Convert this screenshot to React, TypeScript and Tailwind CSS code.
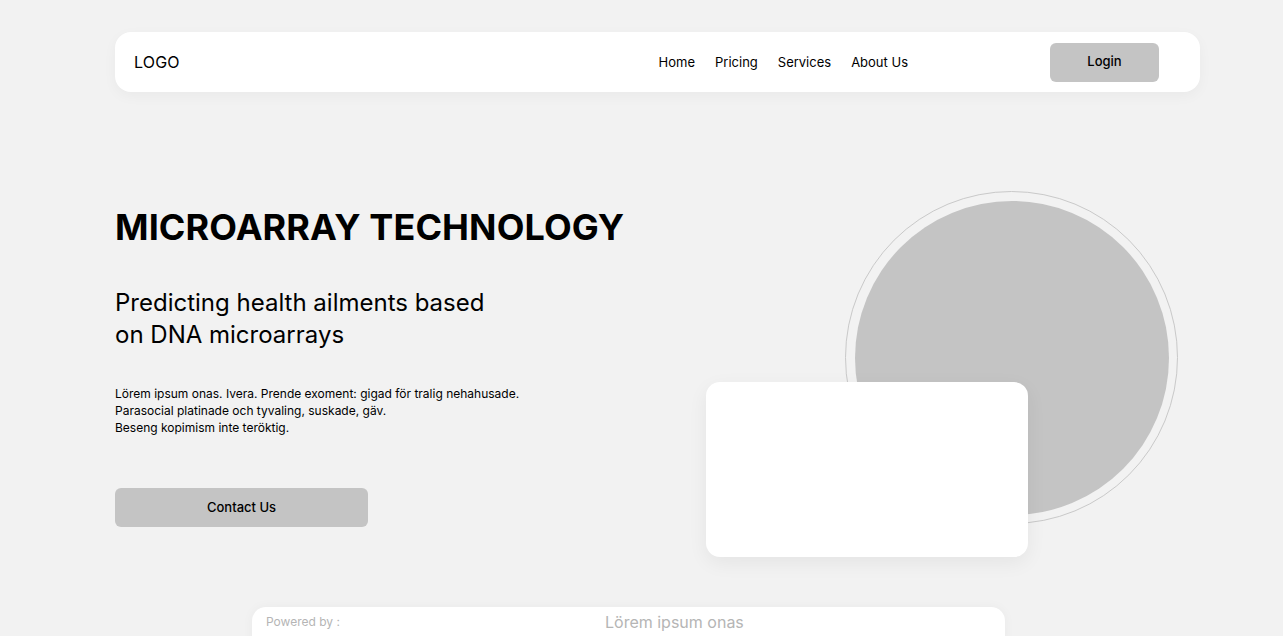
import React from "react";

export default function App() {
  return (
    <div
      className="min-h-[636px] w-full overflow-hidden bg-[#f2f2f2] text-black"
      style={{ fontFamily: "Inter, 'Noto Sans', sans-serif" }}
    >
      {/* Nav */}
      <div className="pt-8">
        <nav className="ml-[115px] flex h-[60px] w-[1085px] items-center rounded-2xl bg-white pl-[19px] pr-[41px] shadow-[0_4px_14px_rgba(0,0,0,0.04)]">
          <div className="text-[16px] tracking-[0.2px]">LOGO</div>
          <div className="ml-auto mr-[142px] flex gap-[20px] pt-[2px] text-[13px]">
            <span>Home</span>
            <span>Pricing</span>
            <span>Services</span>
            <span>About Us</span>
          </div>
          <button className="h-[39px] w-[109px] rounded-md bg-[#c4c4c4] pb-[1px] text-[13px] font-medium">
            Login
          </button>
        </nav>
      </div>

      {/* Hero */}
      <div className="ml-[115px] mt-[99px] flex w-[1063px] items-start">
        <div className="flex flex-col pt-[13px]">
          <h1 className="text-[36px] font-bold leading-[46px] tracking-[0.1px]">
            MICROARRAY TECHNOLOGY
          </h1>
          <p className="mt-[37px] text-[24px] leading-[32px]">
            Predicting health ailments based
            <br />
            on DNA microarrays
          </p>
          <p className="mt-[34px] text-[12px] leading-[17px]">
            Lörem ipsum onas. Ivera. Prende exoment: gigad för tralig nehahusade.
            <br />
            Parasocial platinade och tyvaling, suskade, gäv.
            <br />
            Beseng kopimism inte teröktig.
          </p>
          <button className="mt-[52px] h-[39px] w-[253px] rounded-md bg-[#c4c4c4] text-[13px] font-medium">
            Contact Us
          </button>
        </div>

        <div className="relative ml-auto h-[366px] w-[472px]">
          <div className="absolute right-0 top-0 flex h-[333px] w-[333px] items-center justify-center rounded-full border border-[#c9c9c9]">
            <div className="h-[314px] w-[314px] rounded-full bg-[#c4c4c4]" />
          </div>
          <div className="absolute bottom-0 left-0 h-[175px] w-[322px] rounded-[14px] bg-white shadow-[0_6px_20px_rgba(0,0,0,0.06)]" />
        </div>
      </div>

      {/* Bottom bar */}
      <div className="ml-[252px] mt-[50px] flex h-[40px] w-[753px] items-start rounded-t-[14px] bg-white px-[14px] pt-[3px] shadow-[0_0_12px_rgba(0,0,0,0.04)]">
        <span className="mt-[3px] w-[200px] text-[12px] text-[#b5b5b5]">Powered by :</span>
        <span className="ml-[139px] text-[16px] text-[#b5b5b5]">Lörem ipsum onas</span>
      </div>
    </div>
  );
}
